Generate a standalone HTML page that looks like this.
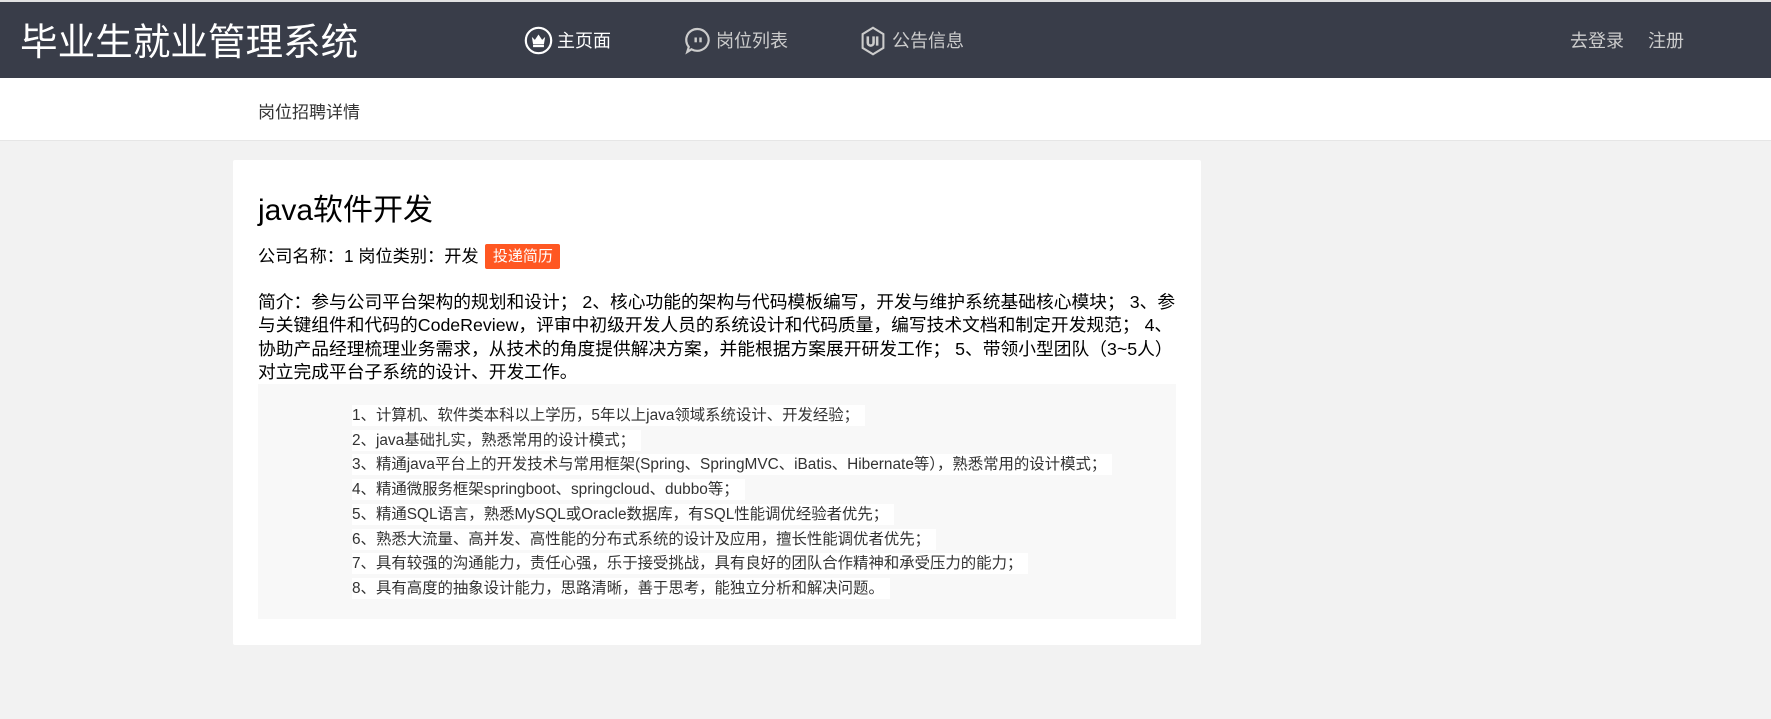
<!DOCTYPE html>
<html><head><meta charset="utf-8">
<style>
*{margin:0;padding:0;box-sizing:border-box}
body{width:1771px;height:719px;background:#f2f2f2;font-family:"Liberation Sans","Noto Sans CJK SC",sans-serif;overflow:hidden;position:relative}
.hd{position:absolute;left:0;top:0;width:1771px;height:78px;background:#393d49;border-top:2px solid #e2e2e2}
.logo{position:absolute;left:20px;top:18px;color:#fff;font-size:37.6px;line-height:44px}
.nav{position:absolute;top:27px;font-size:18px;line-height:24px;color:#ccc}
.nav svg{position:absolute;left:-33px;top:-3px}
.sub{position:absolute;left:0;top:78px;width:1771px;height:63px;background:#fff;border-bottom:1px solid #e6e6e6}
.sub span{position:absolute;left:258px;top:20px;font-size:17px;color:#333}
.card{position:absolute;left:233px;top:160px;width:968px;height:485px;background:#fff;border-radius:2px}
.t{position:absolute;left:25px;top:31px;font-size:30px;color:#000;line-height:40px}
.meta{position:absolute;left:25px;top:84px;font-size:17.2px;color:#000;line-height:24px}
.btn{display:inline-block;background:#ff5722;color:#fff;font-size:15px;line-height:25px;width:75px;text-align:center;border-radius:2px;vertical-align:top;margin-left:2px}
.intro{position:absolute;left:25px;top:131px;font-size:17.75px;line-height:23.3px;color:#000;white-space:nowrap}
.pre{position:absolute;left:25px;top:224px;width:918px;height:235px;background:#f8f8f8;padding:20px 0 0 94px}
.pre div{font-size:15.4px;line-height:24.7px;color:#333;white-space:nowrap}
.pre span{background:#fff;padding:2px 6px 2px 0}
</style></head><body>
<div class="hd">
<div class="logo">毕业生就业管理系统</div>
<div class="nav" style="left:557px;color:#fff">
<svg width="29" height="29" viewBox="0 0 24 24"><circle cx="12" cy="12" r="10.5" fill="none" stroke="#fff" stroke-width="1.8"/><path d="M6.5 9l2.5 2.5L12 7l3 4.5L17.5 9 16.5 15h-9z" fill="#fff"/><rect x="7.5" y="15.5" width="9" height="2" fill="#fff"/></svg>主页面</div>
<div class="nav" style="left:716px">
<svg width="29" height="29" viewBox="0 0 24 24"><path d="M12 2.5a9.5 9 0 1 1-5 16.8L3.5 21.5l1.3-4.2A9 9 0 0 1 12 2.5z" fill="none" stroke="#ccc" stroke-width="1.8"/><rect x="9.5" y="9.5" width="2" height="4" fill="#ccc"/><rect x="13.5" y="9.5" width="2" height="4" fill="#ccc"/></svg>岗位列表</div>
<div class="nav" style="left:892px">
<svg width="28" height="30" viewBox="0 0 24 26"><path d="M12 1.5L21 7v12l-9 5.5L3 19V7z" fill="none" stroke="#ccc" stroke-width="1.8"/><path d="M7.5 9v5.5a2.5 2.5 0 0 0 5 0V9" fill="none" stroke="#ccc" stroke-width="2.2"/><rect x="14.5" y="9" width="2.2" height="8" fill="#ccc"/></svg>公告信息</div>
<div class="nav" style="left:1570px">去登录</div>
<div class="nav" style="left:1648px">注册</div>
</div>
<div class="sub"><span>岗位招聘详情</span></div>
<div class="card">
<div class="t">java软件开发</div>
<div class="meta">公司名称：1 岗位类别：开发 <span class="btn">投递简历</span></div>
<div class="intro">简介：参与公司平台架构的规划和设计； 2、核心功能的架构与代码模板编写，开发与维护系统基础核心模块； 3、参<br>与关键组件和代码的CodeReview，评审中初级开发人员的系统设计和代码质量，编写技术文档和制定开发规范； 4、<br>协助产品经理梳理业务需求，从技术的角度提供解决方案，并能根据方案展开研发工作； 5、带领小型团队（3~5人）<br>对立完成平台子系统的设计、开发工作。</div>
<div class="pre">
<div><span>1、计算机、软件类本科以上学历，5年以上java领域系统设计、开发经验；</span></div>
<div><span>2、java基础扎实，熟悉常用的设计模式；</span></div>
<div><span>3、精通java平台上的开发技术与常用框架(Spring、SpringMVC、iBatis、Hibernate等），熟悉常用的设计模式；</span></div>
<div><span>4、精通微服务框架springboot、springcloud、dubbo等；</span></div>
<div><span>5、精通SQL语言，熟悉MySQL或Oracle数据库，有SQL性能调优经验者优先；</span></div>
<div><span>6、熟悉大流量、高并发、高性能的分布式系统的设计及应用，擅长性能调优者优先；</span></div>
<div><span>7、具有较强的沟通能力，责任心强，乐于接受挑战，具有良好的团队合作精神和承受压力的能力；</span></div>
<div><span>8、具有高度的抽象设计能力，思路清晰，善于思考，能独立分析和解决问题。</span></div>
</div>
</div>
</body></html>
